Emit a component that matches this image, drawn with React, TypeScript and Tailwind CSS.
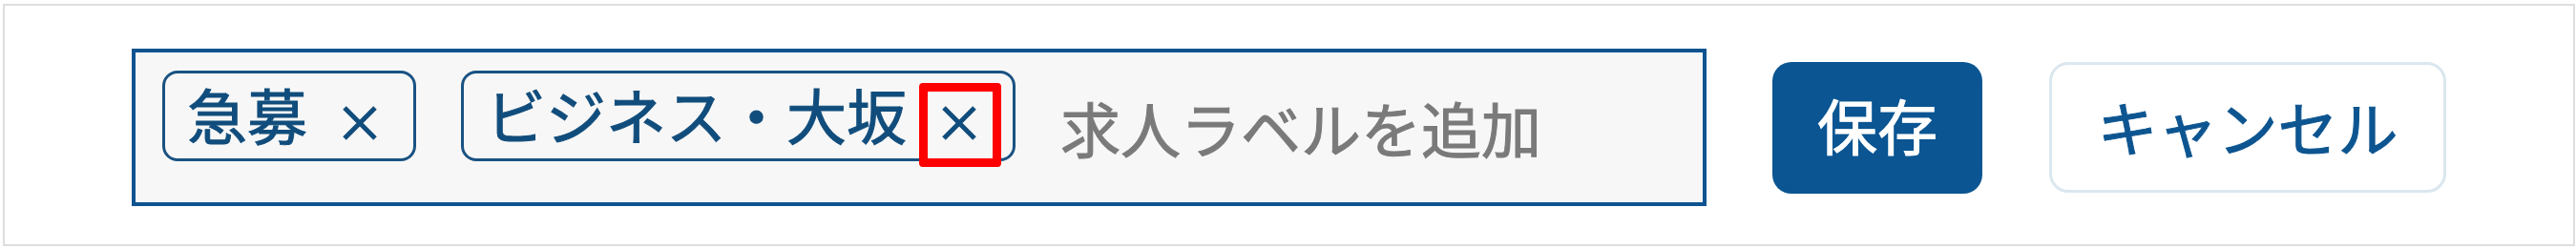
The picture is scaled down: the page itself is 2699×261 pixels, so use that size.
const font = { fontFamily: '"Noto Sans CJK JP", "Noto Sans", sans-serif' }

function CloseMark() {
  return (
    <svg width="38" height="38" viewBox="0 0 38 38" className="block">
      <path d="M3 3 L35 35 M35 3 L3 35" stroke="#114d7c" strokeWidth="5" fill="none" />
    </svg>
  )
}

const tags = [
  { label: '急募', marked: false },
  { label: 'ビジネス・大坂', marked: true },
]

export default function App() {
  return (
    <div className="h-[261px] w-[2699px] bg-white pt-[4px] pl-[3px]" style={font}>
      <div className="flex h-[254px] w-[2695px] items-start border-2 border-[#dedede] bg-white pt-[45px] pl-[133px]">
        {/* label input */}
        <div className="flex h-[165px] w-[1650px] shrink-0 items-start border-4 border-[#0f5390] bg-[#f7f7f7] pt-[19px] pl-[28px]">
          <div className="flex items-start gap-[47px]">
            {tags.map((t) => (
              <div
                key={t.label}
                className="flex h-[95px] items-center rounded-[16px] border-[3px] border-[#1a5282] pr-[37px] pl-[23px] text-[63px] leading-none text-[#114d7c] [-webkit-text-stroke:1px_currentColor]"
              >
                <span className="mb-[6px]">{t.label}</span>
                <span className="relative ml-[36px] mt-[15px]">
                  <CloseMark />
                  {t.marked && (
                    <span className="absolute -top-[23px] -right-[25px] -bottom-[27px] -left-[23px] rounded-[4px] border-[9px] border-[#ff0000]" />
                  )}
                </span>
              </div>
            ))}
          </div>
          <span className="mt-[27px] ml-[47px] text-[63px] leading-none text-[#7a7a7a] [-webkit-text-stroke:1px_currentColor]">求人ラベルを追加</span>
        </div>

        <button className="mt-[14px] ml-[69px] flex h-[138px] w-[220px] shrink-0 items-center justify-center rounded-[20px] bg-[#0a5592] pb-[10px] text-[63px] leading-none text-white [-webkit-text-stroke:1px_currentColor]">
          保存
        </button>
        <button className="mt-[14px] ml-[70px] flex h-[137px] w-[416px] shrink-0 items-center justify-center rounded-[20px] border-[3px] border-[#dbe7ef] bg-white pb-[4px] text-[63px] leading-none text-[#0d5590] [-webkit-text-stroke:1px_currentColor]">
          キャンセル
        </button>
      </div>
    </div>
  )
}
